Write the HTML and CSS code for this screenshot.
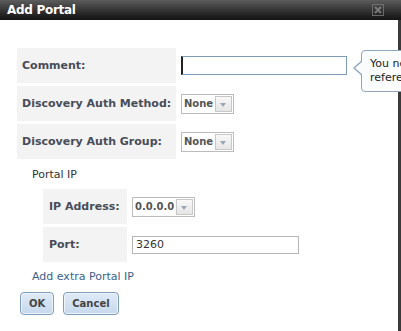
FILE: index.html
```html
<!DOCTYPE html>
<html lang="en">
<head>
    <meta charset="UTF-8">
    <title>Add Portal</title>
    <link rel="stylesheet" href="styles.css">
</head>
<body>
    <div class="dialog">
        <div class="titlebar">
            <span class="title">Add Portal</span>
            <span class="close">
                <svg width="12" height="12" viewBox="0 0 12 12">
                    <rect x="0.5" y="0.5" width="11" height="11" fill="none" stroke="#7a7a7a"/>
                    <path d="M3 3 L9 9 M9 3 L3 9" stroke="#8a8a8a" stroke-width="2"/>
                </svg>
            </span>
        </div>
        <div class="content">
            <table class="form">
                <tr>
                    <th>Comment:</th>
                    <td><input type="text" class="text focused"></td>
                </tr>
                <tr>
                    <th>Discovery Auth Method:</th>
                    <td><span class="select"><span class="value">None</span><span class="arrow"></span></span></td>
                </tr>
                <tr>
                    <th>Discovery Auth Group:</th>
                    <td><span class="select"><span class="value">None</span><span class="arrow"></span></span></td>
                </tr>
            </table>

            <div class="section">Portal IP</div>
            <table class="form inner">
                <tr>
                    <th>IP Address:</th>
                    <td><span class="select"><span class="value">0.0.0.0</span><span class="arrow"></span></span></td>
                </tr>
                <tr>
                    <th>Port:</th>
                    <td><input type="text" class="text" value="3260"></td>
                </tr>
            </table>
            <a class="extra" href="#">Add extra Portal IP</a>

            <div class="buttons">
                <button>OK</button>
                <button>Cancel</button>
            </div>
        </div>

        <div class="tooltip">You need to add a reference for this portal</div>
    </div>
</body>
</html>
```

FILE: styles.css
```css
html, body { margin: 0; padding: 0; overflow: hidden; }
body { font-family: "DejaVu Sans", Verdana, sans-serif; font-size: 11px; color: #333; background: #fff; }
.dialog { position: relative; width: 401px; height: 331px; overflow: hidden; }

.titlebar { height: 20px; background: linear-gradient(#5c5c5c, #262626 70%, #141414); display: flex; align-items: center; justify-content: space-between; padding: 0 0 0 7px; }
.title { color: #fff; font-weight: bold; font-size: 12px; letter-spacing: -0.3px; }
.close { margin-right: 17px; display: flex; opacity: 0.8; }

.content { height: 311px; box-sizing: border-box; padding: 25px 0 0 17px; border-right: 3px solid #3a3a3a; }

.form { border-collapse: separate; border-spacing: 0 3px; }
.form th { background: #f3f3f3; color: #484c58; font-weight: bold; text-align: left; height: 35px; padding: 0 4px 0 5px; white-space: nowrap; width: 150px; }
.form td { padding: 0 0 0 5px; }
.inner { margin: 5px 0 0 26px; }
.inner th { width: 74px; padding-left: 6px; }

.text { font-family: "DejaVu Sans", Verdana, sans-serif; font-size: 11px; border: 1px solid #b5b5b5; height: 18px; box-sizing: border-box; padding: 0 3px; width: 167px; color: #333; margin: 0; }
.text.focused { border-color: #7b9ebd; border-left: 2px solid #222; height: 19px; width: 166px; outline: none; }

.select { display: inline-flex; align-items: stretch; border: 1px solid #bcbcbc; height: 20px; box-sizing: border-box; vertical-align: middle; background: #fff; }
.select .value { font-size: 10px; font-weight: bold; color: #555; padding: 0 2px; display: flex; align-items: center; }
.select .arrow { width: 15px; margin: 1px 1px 1px 0; border: 1px solid #c8c8c8; background: linear-gradient(#f8f8f8, #e6e6e6); position: relative; }
.select .arrow::after { content: ""; position: absolute; left: 4px; top: 6px; border-left: 3.5px solid transparent; border-right: 3.5px solid transparent; border-top: 4px solid #9aa6b4; }

.section { margin: 6px 0 0 15px; color: #333; }
.extra { display: block; margin: 5px 0 0 15px; color: #3b5f8d; text-decoration: none; }

.buttons { display: flex; gap: 9px; margin: 9px 0 0 3px; }
.buttons button { height: 23px; padding: 0 8px; border: 1px solid #7f9dbf; border-radius: 4px; background: linear-gradient(#dfeaf6, #c7d9ee); color: #444; font-family: "DejaVu Sans", Verdana, sans-serif; font-size: 10px; font-weight: bold; box-shadow: inset 0 0 0 1px #eef4fb; }

.tooltip { position: absolute; left: 361px; top: 50px; width: 150px; padding: 6px 6px 6px 8px; line-height: 14px; font-size: 11px; color: #222; background: #fafcfe; border: 1px solid #8fa6bd; border-radius: 4px; z-index: 2; }
.tooltip::before { content: ""; position: absolute; left: -9px; top: 9px; border-top: 8px solid transparent; border-bottom: 8px solid transparent; border-right: 9px solid #8fa6bd; }
.tooltip::after { content: ""; position: absolute; left: -7px; top: 10px; border-top: 7px solid transparent; border-bottom: 7px solid transparent; border-right: 8px solid #fafcfe; }
```
